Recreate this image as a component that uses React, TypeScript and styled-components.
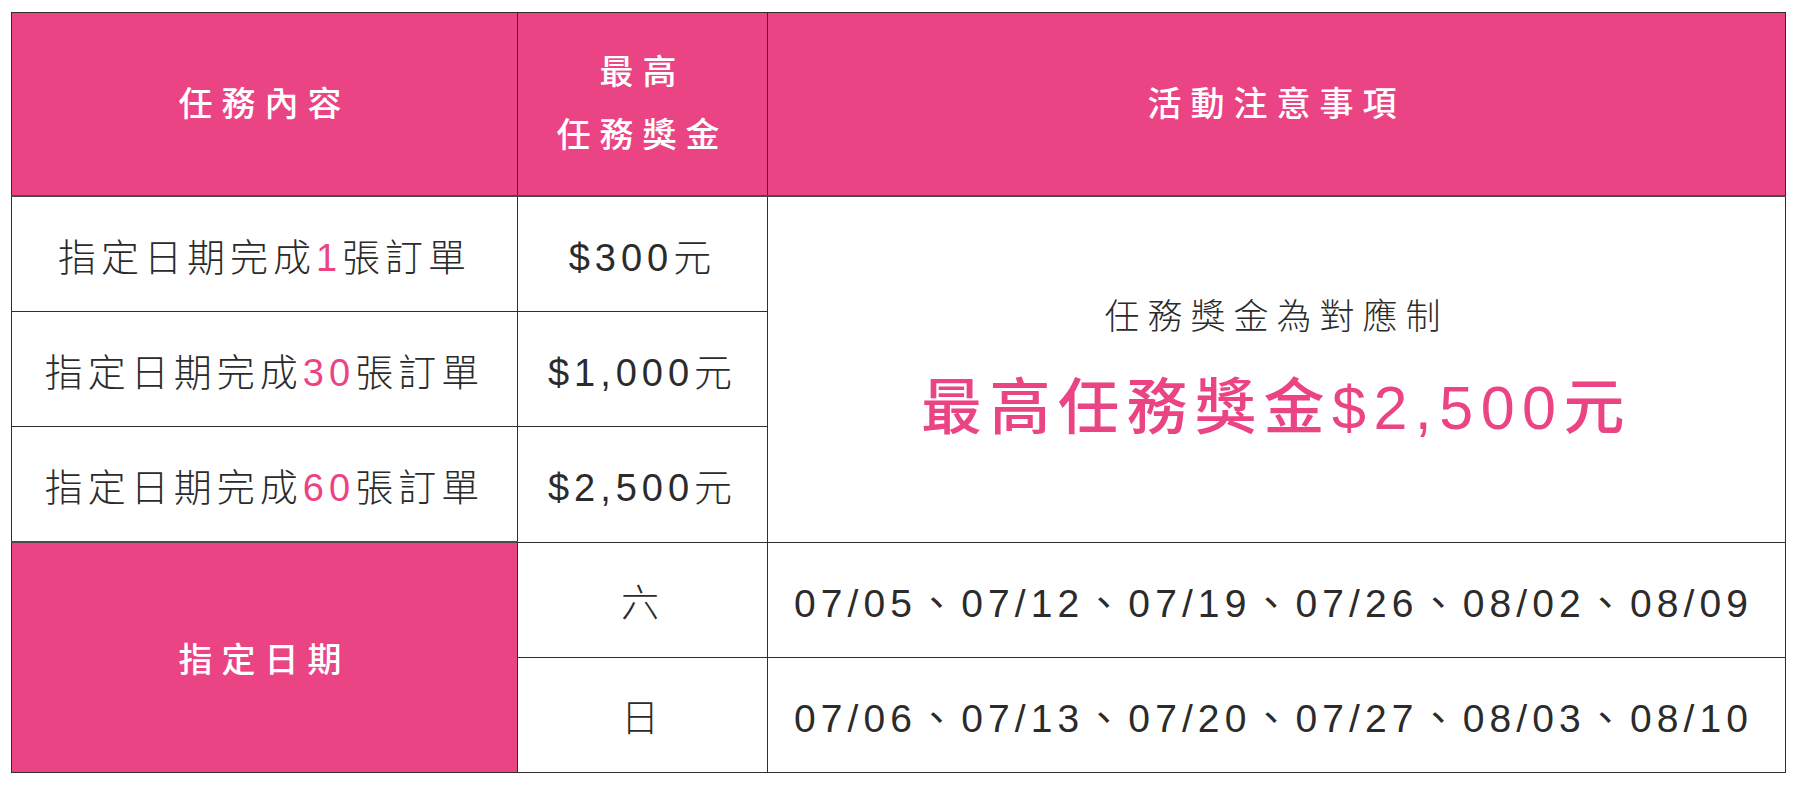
import styled, { createGlobalStyle } from "styled-components";

const pink = "#eb4484";
const line = "#2e2e2e";

const GlobalStyle = createGlobalStyle`
  html, body {
    margin: 0;
    padding: 0;
    background: #ffffff;
  }
  body {
    font-family: "Liberation Sans", "Noto Sans CJK TC", sans-serif;
    color: #2b2b2b;
  }
`;

const Page = styled.div`
  padding: 12px 14px 0 11px;
`;

const Table = styled.table`
  width: 1775px;
  border-collapse: collapse;
  table-layout: fixed;
  border: 1px solid ${line};
`;

const HeadCell = styled.th`
  height: 182px;
  background: ${pink};
  color: #ffffff;
  font-size: 34px;
  font-weight: 500;
  letter-spacing: 9px;
  line-height: 63px;
  text-align: center;
  vertical-align: middle;
  border: 1px solid ${line};
  border-bottom: 2px solid #4a4a4a;
  padding: 0;
`;

const Cell = styled.td`
  height: 114px;
  font-size: 38px;
  font-weight: 300;
  letter-spacing: 5px;
  text-align: center;
  vertical-align: middle;
  border: 1px solid ${line};
  padding: 0;
  white-space: nowrap;
`;

const PinkCell = styled.td`
  background: ${pink};
  color: #ffffff;
  font-size: 34px;
  font-weight: 500;
  letter-spacing: 9px;
  text-align: center;
  vertical-align: middle;
  border: 1px solid ${line};
  border-top: 2px solid #4a4a4a;
  padding: 0;
`;

const DateCell = styled(Cell)`
  font-size: 39px;
  letter-spacing: 5.1px;
  font-weight: 400;
  padding-right: 6px;
`;

const Hot = styled.span`
  color: ${pink};
`;

const Note = styled.div`
  font-size: 35px;
  font-weight: 300;
  letter-spacing: 8px;
  line-height: 1;
`;

const BigPrize = styled.div`
  margin-top: 44px;
  color: ${pink};
  font-size: 61px;
  font-weight: 500;
  letter-spacing: 7.5px;
  line-height: 1;
`;

const tasks = [
  { count: "1", prize: "$300元" },
  { count: "30", prize: "$1,000元" },
  { count: "60", prize: "$2,500元" },
];

const dates = [
  { day: "六", list: ["07/05", "07/12", "07/19", "07/26", "08/02", "08/09"] },
  { day: "日", list: ["07/06", "07/13", "07/20", "07/27", "08/03", "08/10"] },
];

export default function App() {
  return (
    <Page>
      <GlobalStyle />
      <Table>
        <colgroup>
          <col style={{ width: 506 }} />
          <col style={{ width: 250 }} />
          <col />
        </colgroup>
        <thead>
          <tr>
            <HeadCell>任務內容</HeadCell>
            <HeadCell>
              最高
              <br />
              任務獎金
            </HeadCell>
            <HeadCell>活動注意事項</HeadCell>
          </tr>
        </thead>
        <tbody>
          {tasks.map((t, i) => (
            <tr key={t.count}>
              <Cell>
                指定日期完成<Hot>{t.count}</Hot>張訂單
              </Cell>
              <Cell>{t.prize}</Cell>
              {i === 0 && (
                <Cell rowSpan={3}>
                  <Note>任務獎金為對應制</Note>
                  <BigPrize>最高任務獎金$2,500元</BigPrize>
                </Cell>
              )}
            </tr>
          ))}
          {dates.map((d, i) => (
            <tr key={d.day}>
              {i === 0 && <PinkCell rowSpan={2}>指定日期</PinkCell>}
              <Cell>{d.day}</Cell>
              <DateCell>{d.list.join("、")}</DateCell>
            </tr>
          ))}
        </tbody>
      </Table>
    </Page>
  );
}
